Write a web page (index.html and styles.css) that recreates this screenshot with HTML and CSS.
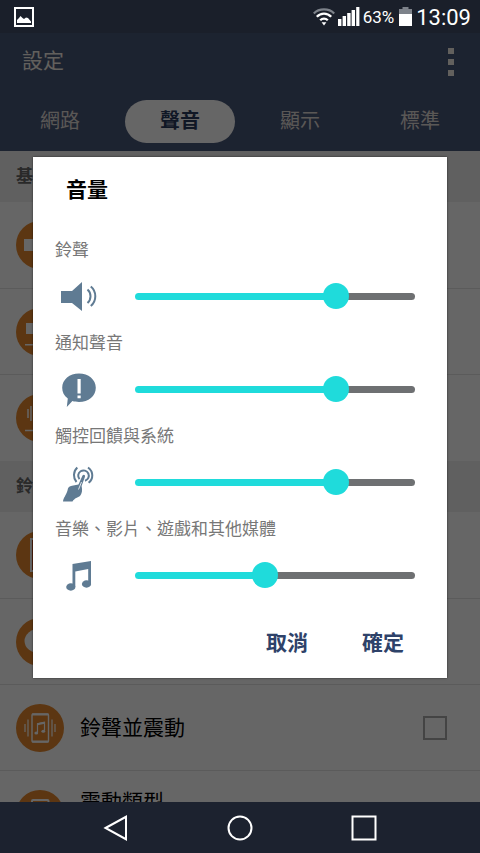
FILE: index.html
```html
<!DOCTYPE html>
<html lang="zh-Hant">
<head>
<meta charset="utf-8">
<meta name="viewport" content="width=device-width, initial-scale=1">
<title>設定</title>
<link rel="stylesheet" href="styles.css">
</head>
<body>
<div class="status">
  <svg class="status-picture" width="20" height="20" viewBox="0 0 20 20"><path d="M1 1h18v18H1z" fill="none" stroke="#fff" stroke-width="2"/><path d="M3 16v-3l2-2 1.500-2 2 2 1.500 1 2-1.500 2 .5 3 3.500v1.500z" fill="#fff"/></svg>
  <div class="status-right">
    <svg width="22" height="18" viewBox="0 0 22 18" fill="none" stroke-width="2.300"><path d="M.8 5.500C6 0 16 0 21.200 5.500" stroke="#7d828a"/><path d="M3.800 8.800c4-4.300 10.400-4.300 14.400 0M7.200 12.200c2.200-2.200 5.400-2.200 7.600 0" stroke="#fff"/><path d="M8.600 14.200h4.800L11 17.600z" fill="#fff"/></svg>
    <svg width="22" height="19" viewBox="0 0 22 19" fill="#fff"><path d="M0 12h3.400v7H0zM4.600 9H8v10H4.600zM9.200 6h3.400v13H9.200zM13.600 3H17v16h-3.400zM18.200 0h3.200v19h-3.200z"/></svg>
    <span class="status-percent">63%</span>
    <svg class="battery" width="13" height="19" viewBox="0 0 13 19"><path d="M3.500 0h6v2H13v5H0V2h3.500z" fill="#7d828a"/><path d="M0 7h13v12H0z" fill="#fff"/></svg>
    <span class="status-time">13:09</span>
  </div>
</div>

<div class="app">
  <header class="header">
    <div class="title-bar">
      <h1 class="title">設定</h1>
      <button class="more" aria-label="更多"><svg width="6" height="28" viewBox="0 0 6 28" fill="currentColor"><path d="M0 0h6v6H0zM0 11h6v6H0zM0 22h6v6H0z"/></svg></button>
    </div>
    <nav class="tabs">
      <a class="tab" href="#network">網路</a>
      <a class="tab tab-active" href="#sound">聲音</a>
      <a class="tab" href="#display">顯示</a>
      <a class="tab" href="#general">標準</a>
    </nav>
  </header>

  <main class="settings">
    <h2 class="section">基</h2>
    <ul class="list">
      <li class="row"><svg class="icon" viewBox="0 0 48 48"><circle cx="24" cy="24" r="24"/><path d="M8 18h22v12H8z" fill="#fff"/></svg></li>
      <li class="row"><svg class="icon" viewBox="0 0 48 48"><circle cx="24" cy="24" r="24"/><path d="M10 15h22v11H10zM9 36h28v1.500H9z" fill="#fff"/></svg></li>
      <li class="row"><svg class="icon" viewBox="0 0 48 48"><circle cx="24" cy="24" r="24"/><path d="M12 15v9M15 12v15M36 15v9M33 12v15M9 36.500h28" fill="none" stroke="#fff" stroke-width="1.500"/></svg></li>
    </ul>
    <h2 class="section">鈴</h2>
    <ul class="list">
      <li class="row"><svg class="icon" viewBox="0 0 48 48"><circle cx="24" cy="24" r="24"/><path d="M15 8h18v32H15z" fill="#c8501e" stroke="#fff" stroke-width="2"/></svg></li>
      <li class="row"><svg class="icon" viewBox="0 0 48 48"><circle cx="24" cy="24" r="24"/><ellipse cx="24" cy="23" rx="15.500" ry="12.500" fill="#fff"/></svg></li>
      <li class="row">
        <svg class="icon" viewBox="0 0 48 48"><circle cx="24" cy="24" r="24"/><g fill="none" stroke="#fff"><rect x="16" y="10" width="16.500" height="28" rx="1" stroke-width="1.400"/><path d="M16 10.500h16.500M16 37.500h16.500" stroke-width="2"/><path d="M9 20v8M12 15.500v17M36 15.500v17M39 20v8" stroke-width="1.200"/><path d="M21.500 28.500v-8.700l7-1.600v8.500" stroke-width="1.200"/><path d="M21.500 20.300l7-1.600" stroke-width="2"/></g><g fill="#fff"><ellipse cx="20.300" cy="29" rx="1.900" ry="1.500"/><ellipse cx="27.300" cy="27.300" rx="1.900" ry="1.500"/></g></svg>
        <label class="row-title" for="ring-vibrate">鈴聲並震動</label>
        <input class="check" type="checkbox" id="ring-vibrate">
      </li>
      <li class="row row-tall">
        <svg class="icon" viewBox="0 0 48 48"><circle cx="24" cy="24" r="24"/><rect x="16" y="10" width="16.500" height="28" rx="1" fill="none" stroke="#fff" stroke-width="2"/></svg>
        <span class="row-title">震動類型</span>
      </li>
    </ul>
  </main>

  <div class="scrim">
    <form class="dialog" role="dialog" aria-labelledby="dialog-title">
      <h2 class="dialog-title" id="dialog-title">音量</h2>
      <div class="volume">
        <label class="volume-label" for="ring">鈴聲</label>
        <svg class="volume-icon" viewBox="0 0 48 40"><path d="M6 14h11l10-9v29l-10-8H6z" fill="#5f7b93"/><path d="M32.500 12.500c4 3.500 4 10 0 13.500M35.800 9.500c6 5 6 14.500 0 19.500" fill="none" stroke="#5f7b93" stroke-width="2"/></svg>
        <input class="slider" type="range" id="ring" value="74" style="--value:74">
      </div>
      <div class="volume">
        <label class="volume-label" for="notify">通知聲音</label>
        <svg class="volume-icon" viewBox="0 0 48 40"><path d="M24 3.500c9.500 0 16.800 6 16.800 14.300S33.500 32 24 32c-2.600 0-4.600-.2-6.600-.9L11.800 37l1-8.500C9 26 7.200 22 7.200 17.800 7.200 9.500 14.500 3.500 24 3.500z" fill="#5f7b93"/><path d="M22.500 9h3.200v14.500h-3.200zM22.500 25.500h3.200v2.800h-3.200z" fill="#fff"/></svg>
        <input class="slider" type="range" id="notify" value="74" style="--value:74">
      </div>
      <div class="volume">
        <label class="volume-label" for="touch">觸控回饋與系統</label>
        <svg class="volume-icon" viewBox="0 0 48 40"><path d="M8 38.500c.5-4 3-6 4.500-11 .3-3 2-4.500 4.500-4.700l6.500-1.300 4-9c1.400-1.400 3-.4 2.400 1.500l-3.300 9c1 4.500.4 7.500-1.600 10-2 1.500-5.500 2-7.500 5.500z" fill="#5f7b93"/><path d="M24.500 16.200a5.300 5.300 0 1 1 5.500 1.600M22.300 4.500c-4.300 4-4.300 10.500-.8 14.500M33 4.500c5.600 4 5.600 11.500.6 15.200" fill="none" stroke="#5f7b93" stroke-width="2"/><path d="M26.500 19l-3 7.500" stroke="#fff" stroke-width=".8"/></svg>
        <input class="slider" type="range" id="touch" value="74" style="--value:74">
      </div>
      <div class="volume">
        <label class="volume-label" for="media">音樂、影片、遊戲和其他媒體</label>
        <svg class="volume-icon" viewBox="0 0 48 40" fill="#5f7b93"><path d="M17.500 8L36 5v23h-2.800V13L20.300 15.500V31h-2.800z"/><ellipse cx="15.800" cy="31" rx="4.600" ry="3.700"/><ellipse cx="31.500" cy="28" rx="4.600" ry="3.700"/></svg>
        <input class="slider" type="range" id="media" value="46" style="--value:46">
      </div>
      <div class="actions">
        <button class="action" type="button">取消</button>
        <button class="action" type="button">確定</button>
      </div>
    </form>
  </div>
</div>

<div class="softkeys">
  <button class="softkey" aria-label="返回"><svg width="26" height="26" viewBox="0 0 26 26"><path d="M2.500 13L23 1.800v22.400z"/></svg></button>
  <button class="softkey" aria-label="主畫面"><svg width="26" height="26" viewBox="0 0 26 26"><circle cx="13" cy="13" r="11.500"/></svg></button>
  <button class="softkey" aria-label="最近"><svg width="26" height="26" viewBox="0 0 26 26"><path d="M1.500 1.500h23v23h-23z"/></svg></button>
</div>
</body>
</html>
```
FILE: styles.css
```css
* {
  box-sizing: border-box;
}

body {
  margin: 0;
  height: 100vh;
  display: flex;
  flex-direction: column;
  overflow: hidden;
  font-family: Roboto, "Noto Sans CJK TC", sans-serif;
  background: #1c222f;
}

h1,
h2,
ul {
  margin: 0;
  padding: 0;
}

button {
  padding: 0;
  border: 0;
  background: none;
  font-family: inherit;
}

svg {
  display: block;
}

.status {
  flex: none;
  display: flex;
  align-items: center;
  justify-content: space-between;
  height: 33px;
  padding: 0 9px 0 14px;
  background: #1a1f2a;
  color: #fff;
}

.status-right {
  display: flex;
  align-items: center;
  gap: 3px;
}

.status-percent {
  font-size: 17px;
}

.battery {
  margin: 0 1px 0 2px;
}

.status-time {
  font-size: 22px;
  line-height: 33px;
  padding-top: 2px;
}

/* Everything between the status bar and the soft keys; the scrim covers it. */
.app {
  flex: 1;
  min-height: 0;
  position: relative;
  overflow: hidden;
  background: #fff;
}

.header {
  background: #485778;
  color: #fff;
}

.title-bar {
  display: flex;
  align-items: center;
  justify-content: space-between;
  height: 58px;
  padding: 0 26px 0 22px;
}

.title {
  font-size: 21px;
  font-weight: 400;
  line-height: 56px;
  padding-bottom: 2px;
  color: #f4f0e8;
}

.more {
  color: #f4f0e8;
}

.tabs {
  display: grid;
  grid-template-columns: repeat(4, 1fr);
  align-items: center;
  height: 60px;
}

.tab {
  margin: 0 5px;
  border-radius: 22px;
  font-size: 20px;
  line-height: 43px;
  text-align: center;
  text-decoration: none;
  color: #e0dcd8;
}

.tab-active {
  background: #fff;
  color: #283a5e;
  font-weight: 700;
}

.section {
  height: 51px;
  padding-left: 16px;
  font-size: 17px;
  line-height: 51px;
  color: #666;
  background: #f0f0f0;
}

.list {
  list-style: none;
  padding-bottom: 1px;
}

.row {
  display: flex;
  align-items: center;
  gap: 16px;
  height: 86px;
  padding: 0 33px 0 16px;
}

.row + .row {
  border-top: 1px solid #e4e4e4;
}

.icon {
  flex: none;
  width: 48px;
  height: 48px;
  fill: #e6882d;
}

.row-title {
  flex: 1;
  font-size: 21px;
  line-height: 28px;
  color: #000;
}

.row-tall .row-title {
  padding-bottom: 24px;
}

.check {
  appearance: none;
  width: 24px;
  height: 24px;
  margin: 0;
  border: 2px solid #aaa;
}

.scrim {
  position: absolute;
  inset: 0;
  display: flex;
  align-items: center;
  padding: 0 33px;
  background: rgba(0, 0, 0, 0.6);
}

.dialog {
  flex: 1;
  background: #fff;
  box-shadow: 0 0 2px rgba(0, 0, 0, 0.6);
}

.dialog-title {
  padding: 0 33px 8px;
  font-size: 21px;
  line-height: 67px;
  color: #000;
}

.volume {
  display: grid;
  grid-template-columns: 48px 1fr;
  column-gap: 32px;
  align-items: center;
  padding: 0 32px 0 22px;
}

.volume-label {
  grid-column: 1 / -1;
  font-size: 17px;
  line-height: 36px;
  color: #777;
}

.volume-icon {
  width: 48px;
  height: 40px;
}

.slider {
  appearance: none;
  width: 100%;
  height: 57px;
  margin: 0;
  background: none;
}

.slider::-webkit-slider-runnable-track {
  --fill: calc(13px + (100% - 26px) * var(--value) / 100);
  height: 7px;
  border-radius: 4px;
  background: linear-gradient(to right, #1fdbdb var(--fill), #6e7072 var(--fill));
}

.slider::-webkit-slider-thumb {
  appearance: none;
  width: 26px;
  height: 26px;
  margin-top: -10px;
  border-radius: 50%;
  background: #1fdbdb;
}

.actions {
  display: flex;
  justify-content: flex-end;
  padding: 5px 16px 0;
}

.action {
  width: 96px;
  font-size: 21px;
  font-weight: 700;
  line-height: 69px;
  color: #2e4269;
}

.softkeys {
  flex: none;
  display: grid;
  grid-template-columns: repeat(3, 124px);
  justify-content: center;
  height: 51px;
}

.softkey {
  display: grid;
  place-items: center;
  fill: none;
  stroke: #fff;
  stroke-width: 2;
}
```
